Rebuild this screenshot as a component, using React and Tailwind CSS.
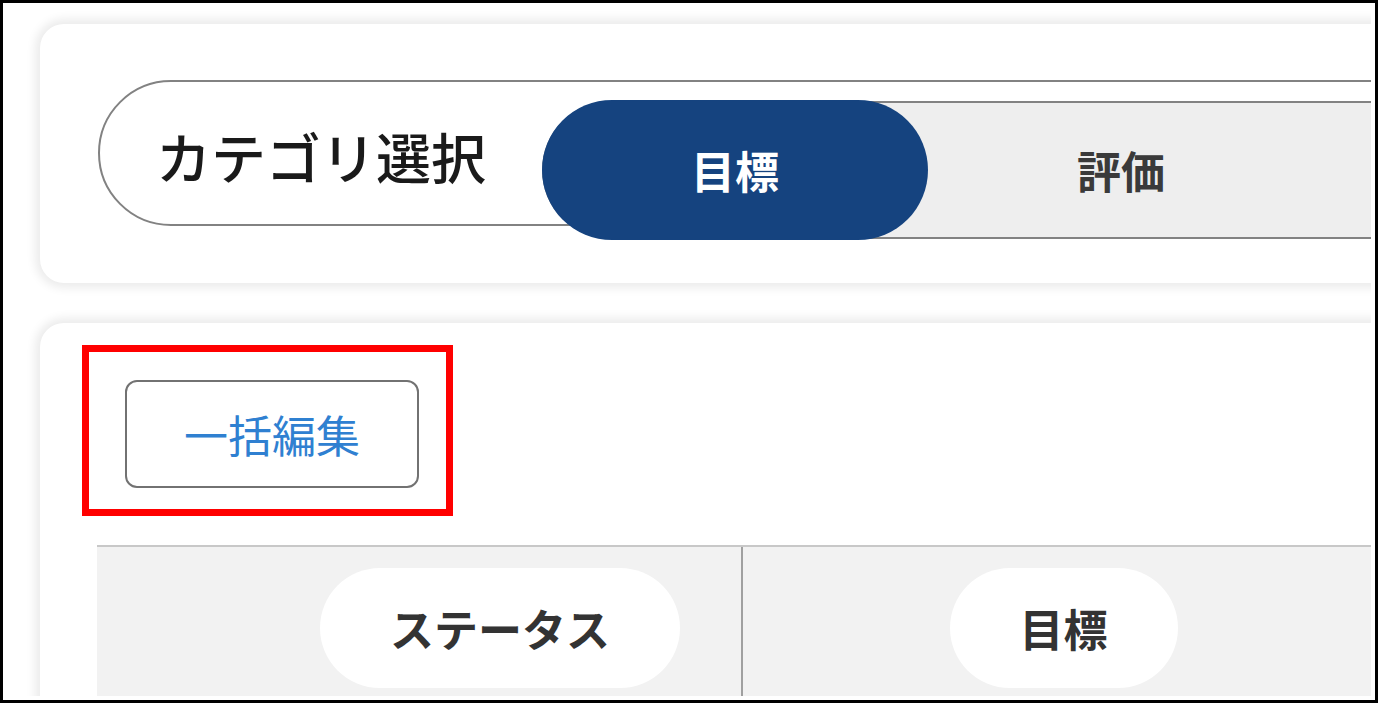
export default function App() {
  return (
    <div className="h-[706px] w-[1380px] bg-white" style={{ fontFamily: '"Noto Sans CJK JP", "Noto Sans", sans-serif' }}>
      <div className="h-[703px] w-[1378px] border-[3px] border-black pr-[4px] pb-[4px]">
        <div className="h-full w-full overflow-hidden">
          <div className="flex flex-col gap-[40px] pl-[37px] pt-[21px]">
            {/* category selector card */}
            <section className="h-[259px] w-[1400px] shrink-0 rounded-[24px] bg-white pl-[58px] pt-[56px] shadow-[0_0_10px_5px_rgba(0,0,0,0.08)]">
              <div className="flex h-[146px] items-center rounded-full border-2 border-[#828282]">
                <div className="w-[442px] shrink-0 pl-[56px] pt-[4px] text-[55px] font-medium leading-none text-[#1a1a1a]">
                  カテゴリ選択
                </div>
                <div className="mt-[34px] flex h-[138px] w-[1000px] shrink-0 items-center rounded-l-full border-y-2 border-l-2 border-[#828282] bg-[#eeeeee]">
                  <div className="-ml-[2px] flex h-[140px] w-[386px] shrink-0 items-center justify-center rounded-full bg-[#15437f] text-[44px] font-bold leading-none text-white">
                    目標
                  </div>
                  <div className="flex w-[386px] shrink-0 items-center justify-center text-[44px] font-bold leading-none text-[#3a3a3a]">
                    評価
                  </div>
                </div>
              </div>
            </section>

            {/* list card */}
            <section className="h-[600px] w-[1400px] shrink-0 rounded-[24px] bg-white pl-[57px] pt-[57px] shadow-[0_0_10px_5px_rgba(0,0,0,0.08)]">
              <div className="relative ml-[28px] w-[294px]">
                <button className="flex h-[108px] w-[294px] items-center justify-center rounded-[12px] border-2 border-[#727272] bg-white text-[44px] leading-none text-[#2f80d1]">
                  一括編集
                </button>
                <div className="pointer-events-none absolute -top-[35px] -right-[34px] -bottom-[28px] -left-[43px] border-[7px] border-[#ff0000]" />
              </div>

              <div className="mt-[57px] flex h-[160px] border-t-2 border-[#c8c8c8] bg-[#f2f2f2]">
                <div className="w-[162px] shrink-0" />
                <div className="flex w-[482px] shrink-0 justify-center pt-[21px]">
                  <span className="flex h-[120px] items-center rounded-full bg-white px-[70px] text-[44px] font-bold leading-none text-[#333333]">
                    ステータス
                  </span>
                </div>
                <div className="flex w-[643px] shrink-0 justify-center border-l-2 border-[#a0a0a0] pt-[21px]">
                  <span className="flex h-[120px] items-center rounded-full bg-white px-[70px] text-[44px] font-bold leading-none text-[#333333]">
                    目標
                  </span>
                </div>
              </div>
            </section>
          </div>
        </div>
      </div>
    </div>
  );
}
